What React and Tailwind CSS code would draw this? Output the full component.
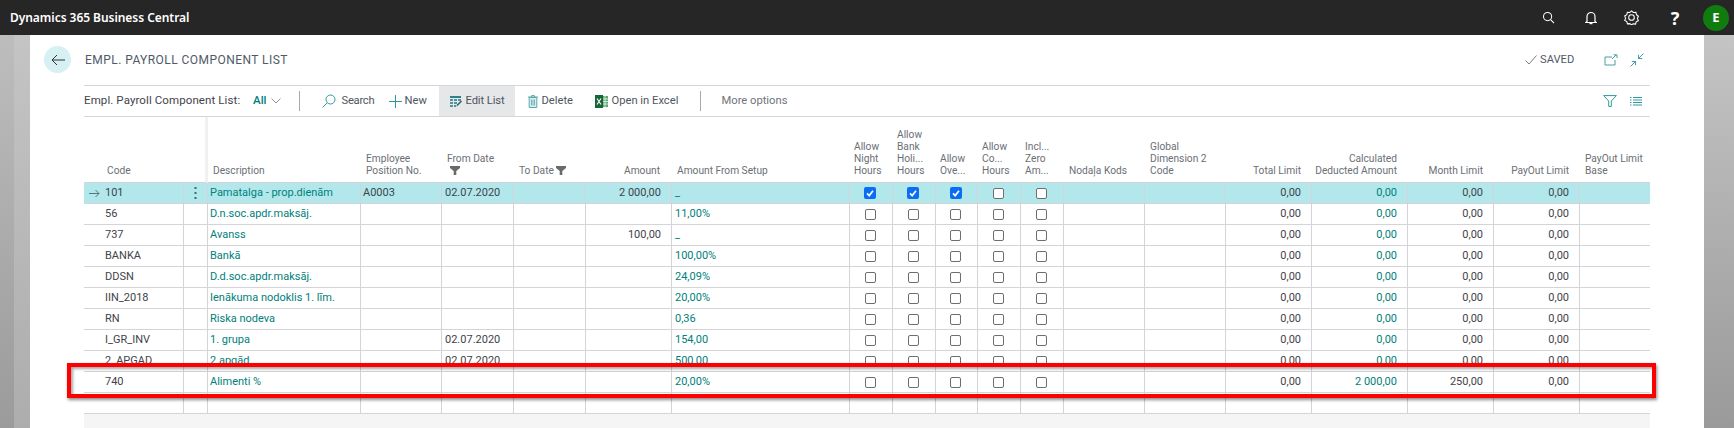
import React from "react";

const widths = ["w-[100px]","w-[24px]","w-[153px]","w-[81px]","w-[72px]","w-[72px]","w-[86px]","w-[178px]","w-[43px]","w-[43px]","w-[42px]","w-[43px]","w-[43px]","w-[81px]","w-[81px]","w-[86px]","w-[96px]","w-[86px]","w-[86px]","w-[70px]"];

const Funnel = () => (
  <svg width="10" height="9" viewBox="0 0 10 9" className="inline-block align-[-1px]"><path d="M0 0h10v2L6.300 5v4H3.700V5L0 2z" fill="#6a6a6a" /></svg>
);

const rows = [
  { code: "101", desc: "Pamatalga - prop.dienām", pos: "A0003", from: "02.07.2020", amt: "2 000,00", setup: "_", checks: [1, 1, 1, 0, 0], calc: "0,00", month: "0,00", sel: true },
  { code: "56", desc: "D.n.soc.apdr.maksāj.", setup: "11,00%", calc: "0,00", month: "0,00" },
  { code: "737", desc: "Avanss", amt: "100,00", setup: "_", calc: "0,00", month: "0,00" },
  { code: "BANKA", desc: "Bankā", setup: "100,00%", calc: "0,00", month: "0,00" },
  { code: "DDSN", desc: "D.d.soc.apdr.maksāj.", setup: "24,09%", calc: "0,00", month: "0,00" },
  { code: "IIN_2018", desc: "Ienākuma nodoklis 1. līm.", setup: "20,00%", calc: "0,00", month: "0,00" },
  { code: "RN", desc: "Riska nodeva", setup: "0,36", calc: "0,00", month: "0,00" },
  { code: "I_GR_INV", desc: "1. grupa", from: "02.07.2020", setup: "154,00", calc: "0,00", month: "0,00" },
  { code: "2_APGAD", desc: "2 apgād.", from: "02.07.2020", setup: "500,00", calc: "0,00", month: "0,00" },
  { code: "740", desc: "Alimenti %", setup: "20,00%", calc: "2 000,00", month: "250,00" },
];

const Check = ({ on }) =>
  on ? (
    <span className="mx-auto flex h-[12px] w-[12px] items-center justify-center rounded-[2px] bg-[#0b6cf5]">
      <svg width="10" height="10" viewBox="0 0 10 10"><path d="M2 5.400 4.200 7.600 8 2.800" fill="none" stroke="#fff" strokeWidth="1.700" /></svg>
    </span>
  ) : (
    <span className="mx-auto block h-[11px] w-[11px] rounded-[2px] border border-[#6e6e6e] bg-white" />
  );

const Td = ({ children, className = "" }) => (
  <td className={`h-[21px] overflow-hidden whitespace-nowrap border-b border-r border-[#d3d3d8] p-0 align-middle ${className}`}>{children}</td>
);

const Th = ({ children, className = "" }) => (
  <th className={`overflow-hidden whitespace-nowrap border-b border-[#d3d3d8] p-0 pb-[5px] align-bottom text-[10.2px] font-normal leading-[12px] text-[#6a6f76] ${className}`}>{children}</th>
);

function Row({ r }) {
  const teal = "text-[#00807a]";
  return (
    <tr className={r.sel ? "bg-[#b2e8ec]" : ""}>
      <Td className="relative pl-[21px]">
        {r.sel && (
          <svg width="11" height="9" viewBox="0 0 11 9" className="absolute left-[5px] top-[6px]"><path d="M0 4.500h10M6.500 1l3.500 3.500L6.500 8" fill="none" stroke="#4a6a70" strokeWidth="0.900" /></svg>
        )}
        {r.code}
      </Td>
      <Td className="text-center">
        {r.sel && (
          <svg width="3" height="13" viewBox="0 0 3 13" className="mx-auto"><g fill="#3f6b72"><rect x="0.500" y="0" width="2" height="2" /><rect x="0.500" y="5" width="2" height="2" /><rect x="0.500" y="10" width="2" height="2" /></g></svg>
        )}
      </Td>
      <Td className={`pl-[2px] ${teal}`}>{r.desc}</Td>
      <Td className="pl-[2px]">{r.pos}</Td>
      <Td className="pl-[3px]">{r.from}</Td>
      <Td />
      <Td className="pr-[10px] text-right">{r.amt}</Td>
      <Td className={`pl-[3px] ${teal}`}>{r.setup}</Td>
      {[0, 1, 2, 3, 4].map((i) => (
        <Td key={i} className="pr-[2px]"><Check on={r.checks && r.checks[i]} /></Td>
      ))}
      <Td />
      <Td />
      <Td className="pr-[10px] text-right">0,00</Td>
      <Td className={`pr-[10px] text-right ${teal}`}>{r.calc}</Td>
      <Td className="pr-[10px] text-right">{r.month}</Td>
      <Td className="pr-[10px] text-right">0,00</Td>
      <td className="border-b border-[#d3d3d8] p-0" />
    </tr>
  );
}

const ActionLabel = ({ children, className = "" }) => <span className={`text-[11.2px] text-[#4f5660] ${className}`}>{children}</span>;

export default function App() {
  return (
    <div className="relative flex h-[428px] w-[1734px] flex-col overflow-hidden bg-white font-['Roboto','Noto_Sans',sans-serif]">
      <header className="flex h-[35px] shrink-0 items-center bg-[#262626] pl-[10px] text-white">
        <span className="font-['Noto_Sans',sans-serif] text-[12px] font-semibold tracking-[-0.05px]">Dynamics 365 Business Central</span>
        <div className="ml-auto flex items-center">
          <svg width="13" height="13" viewBox="0 0 14 14" className="mr-[30px]"><circle cx="6" cy="6" r="4.400" fill="none" stroke="#fff" strokeWidth="1.100" /><path d="M9.200 9.200 13 13" stroke="#fff" strokeWidth="1.200" /></svg>
          <svg width="12" height="14" viewBox="0 0 12 14" className="mr-[27px]"><path d="M2 10.500V5.500a4 4 0 0 1 8 0v5l1.200 1H.8z" fill="none" stroke="#fff" strokeWidth="1.200" /><path d="M4.500 12.500h3" stroke="#fff" strokeWidth="1.400" /></svg>
          <svg width="15" height="15" viewBox="0 0 24 24" className="mr-[31px]" fill="none" stroke="#fff" strokeWidth="1.700"><path d="M12 1.500 15 4l4-.4.9 3.900L23 10l-1.600 3.600L23 17l-3.500 2-1 3.600-3.900-.4-2.600 1.600-2.600-2-3.900.4-1-3.700L1 16.500l1.600-3.500L1 9.500l3.500-2 .9-3.900 3.900.4z" /><circle cx="12" cy="12" r="4.500" /></svg>
          <span className="mr-[23px] w-[10px] text-center font-['Noto_Sans',sans-serif] text-[18px] font-bold leading-none">?</span>
          <span className="mr-[5px] flex h-[26px] w-[26px] items-center justify-center rounded-full bg-[#107c10] font-['Noto_Sans',sans-serif] text-[13px] font-bold">E</span>
        </div>
      </header>

      <div className="flex min-h-0 flex-1">
        <div className="flex w-[30px] shrink-0">
          <div className="w-[14px] bg-gradient-to-b from-[#bdbdbd] to-[#9b9b9b]" />
          <div className="w-[16px] bg-gradient-to-b from-[#c4c4c4] to-[#adadad]" />
        </div>

        <main className="relative flex min-w-0 flex-1 flex-col bg-white pl-[14px] pr-[54px]">
          <div className="flex h-[50px] shrink-0 items-start pt-[11px]">
            <span className="flex h-[27px] w-[27px] items-center justify-center rounded-full bg-[#d6f0f3]">
              <svg width="14" height="12" viewBox="0 0 14 12"><path d="M14 6H1M6 1 1 6l5 5" fill="none" stroke="#333" strokeWidth="1" /></svg>
            </span>
            <span className="ml-[14px] mt-[7px] text-[12px] leading-[14px] tracking-[0.45px] text-[#505a66]">EMPL. PAYROLL COMPONENT LIST</span>
            <div className="ml-auto mr-[6px] mt-[6px] flex items-center">
              <svg width="12" height="10" viewBox="0 0 12 10" className="mr-[3px]"><path d="M0.500 5.500 4 9 11.500 0.500" fill="none" stroke="#6a7078" strokeWidth="0.900" /></svg>
              <span className="w-[33px] text-[11.2px] text-[#505a66]">SAVED</span>
              <svg width="14" height="12" viewBox="0 0 14 12" className="ml-[31px]"><path d="M8 3H1v8h10V6" fill="none" stroke="#45a0a6" strokeWidth="1" /><path d="M8 5l4-4M9.500 0.800H13V4" fill="none" stroke="#45a0a6" strokeWidth="1" /></svg>
              <svg width="14" height="14" viewBox="0 0 14 14" className="ml-[12px]"><path d="M13.500 0.500 8.500 5.500M8.500 1.800v3.700h3.700M0.500 13.500l5-5M5.500 12.200V8.500H1.800" fill="none" stroke="#45a0a6" strokeWidth="1" /></svg>
            </div>
          </div>

          <div className="ml-[40px] flex h-[32px] shrink-0 items-center border-y-[1.5px] border-[#d6d6da]">
            <span className="w-[169px] text-[11.5px] tracking-[0.1px] text-[#3f444c]">Empl. Payroll Component List:</span>
            <span className="text-[11.5px] font-medium text-[#00807a]">All</span>
            <svg width="10" height="6" viewBox="0 0 10 6" className="ml-[4px]"><path d="M0.500 0.500 5 5l4.500-4.500" fill="none" stroke="#7a7a7a" strokeWidth="0.800" /></svg>
            <span className="ml-[18px] h-[20px] w-px bg-[#a9a9ad]" />
            <svg width="14" height="14" viewBox="0 0 14 14" className="ml-[22px]"><circle cx="8.500" cy="5.500" r="4.500" fill="none" stroke="#2e98a0" strokeWidth="1" /><path d="M5.200 8.800.5 13.500" stroke="#2e98a0" strokeWidth="1" /></svg>
            <ActionLabel className="ml-[6px] w-[34px] tracking-[-0.25px]">Search</ActionLabel>
            <svg width="13" height="13" viewBox="0 0 13 13" className="ml-[13px]"><path d="M6.500 0v13M0 6.500h13" stroke="#2e98a0" strokeWidth="1" /></svg>
            <ActionLabel className="ml-[3px] w-[24px]">New</ActionLabel>
            <div className="ml-[10px] flex h-full w-[76px] items-center bg-[#e6e7e9] pl-[11px]">
              <svg width="12" height="12" viewBox="0 0 12 12"><path d="M0 1h11v2H0z" fill="#2f7f8c" /><path d="M0 4h3v2H0zM4 4h3v2H4zM8 4h3v2H8zM0 7h3v2H0zM4 7h3v2H4zM0 10h3v2H0zM4 10h2v2H4z" fill="#2f7f8c" opacity="0.800" /><path d="M6.500 11.500 7 9.500 11 5.500l1 1L8 10.500z" fill="#1f5f6a" /></svg>
              <ActionLabel className="ml-[4px] tracking-[-0.1px]">Edit List</ActionLabel>
            </div>
            <svg width="10" height="13" viewBox="0 0 10 13" className="ml-[13px]"><path d="M0 2h10M3.500 2V.6h3V2" fill="none" stroke="#5aa8ae" strokeWidth="1" /><path d="M1.200 2.500h7.600V12.500H1.200z" fill="#d9eef0" stroke="#5aa8ae" strokeWidth="1" /><path d="M3.500 4.500v6M5 4.500v6M6.500 4.500v6" stroke="#5aa8ae" strokeWidth="0.800" /></svg>
            <ActionLabel className="ml-[4px] w-[33px]">Delete</ActionLabel>
            <svg width="13" height="13" viewBox="0 0 13 13" className="ml-[20px]"><rect x="5" y="1" width="8" height="11" fill="#5da56f" /><path d="M7 1v11M10 1v11M5 4h8M5 6.500h8M5 9h8" stroke="#fff" strokeWidth="0.700" /><rect x="0" y="0" width="8" height="13" fill="#17663a" /><path d="M2 3.500 6 9.500M6 3.500 2 9.500" stroke="#fff" strokeWidth="1.100" /></svg>
            <ActionLabel className="ml-[4px] w-[67px]">Open in Excel</ActionLabel>
            <span className="ml-[21px] h-[20px] w-px bg-[#a9a9ad]" />
            <ActionLabel className="ml-[21px] text-[#6f747b]">More options</ActionLabel>
            <svg width="14" height="12" viewBox="0 0 14 12" className="ml-auto"><path d="M.6.600h12.800L8.300 6v5.400H5.700V6z" fill="none" stroke="#2e98a0" strokeWidth="1" /></svg>
            <svg width="12" height="9" viewBox="0 0 12 9" className="ml-[13px] mr-[8px]"><path d="M0 .5h1.500M3 .5h9M0 3h1.500M3 3h9M0 5.500h1.500M3 5.500h9M0 8h1.500M3 8h9" stroke="#2e98a0" strokeWidth="1" /></svg>
          </div>

          <table className="ml-[40px] w-[1566px] shrink-0 table-fixed border-separate border-spacing-0 font-['Roboto',sans-serif] text-[11px] leading-[14px] text-[#3f4349]">
            <colgroup>{widths.map((w, i) => <col key={i} className={w} />)}</colgroup>
            <thead>
              <tr className="h-[66px]">
                <Th className="pl-[23px] text-left">Code</Th>
                <Th className="border-r-[3px] border-r-[#f1f1f2]" />
                <Th className="pl-[5px] text-left">Description</Th>
                <Th className="pl-[5px] text-left">Employee<br />Position No.</Th>
                <Th className="pl-[5px] text-left">From Date<br /><span className="pl-[3px]"><Funnel /></span></Th>
                <Th className="pl-[5px] text-left">To Date <Funnel /></Th>
                <Th className="pr-[12px] text-right">Amount</Th>
                <Th className="pl-[5px] text-left">Amount From Setup</Th>
                <Th className="pl-[4px] text-left">Allow<br />Night<br />Hours</Th>
                <Th className="pl-[4px] text-left">Allow<br />Bank<br />Holi...<br />Hours</Th>
                <Th className="pl-[4px] text-left">Allow<br />Ove...</Th>
                <Th className="pl-[4px] text-left">Allow<br />Co...<br />Hours</Th>
                <Th className="pl-[4px] text-left">Incl...<br />Zero<br />Am...</Th>
                <Th className="pl-[5px] text-left">Nodaļa Kods</Th>
                <Th className="pl-[5px] text-left">Global<br />Dimension 2<br />Code</Th>
                <Th className="pr-[11px] text-right">Total Limit</Th>
                <Th className="pr-[11px] text-right">Calculated<br />Deducted Amount</Th>
                <Th className="pr-[11px] text-right">Month Limit</Th>
                <Th className="pr-[11px] text-right">PayOut Limit</Th>
                <Th className="pl-[5px] text-left">PayOut Limit<br />Base</Th>
              </tr>
            </thead>
            <tbody>
              {rows.map((r) => <Row key={r.code} r={r} />)}
              <tr>
                {widths.map((w, i) => (i < 19 ? <Td key={i} /> : <td key={i} className="border-b border-[#d3d3d8]" />))}
              </tr>
            </tbody>
          </table>
          <div className="ml-[40px] min-h-0 flex-1 bg-[#f5f5f6]" />
        </main>

        <div className="w-[30px] shrink-0 bg-gradient-to-b from-[#c4c4c4] to-[#9a9a9a]" />
      </div>

      <div className="absolute left-[67px] top-[363px] h-[35px] w-[1589px] border-[4px] border-[#ff0000] shadow-[1px_2px_3px_rgba(0,0,0,0.45),inset_2px_2px_3px_rgba(0,0,0,0.35)]" />
    </div>
  );
}
